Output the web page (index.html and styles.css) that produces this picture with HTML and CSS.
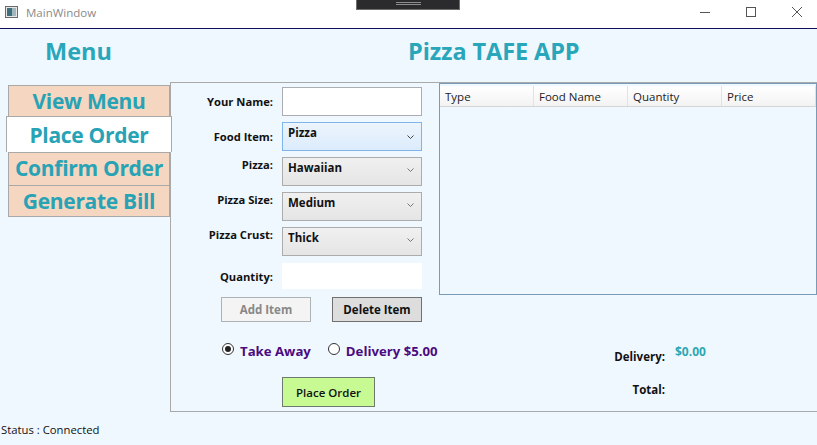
FILE: index.html
```html
<!DOCTYPE html>
<html>
<head>
<meta charset="utf-8">
<title>MainWindow</title>
<link rel="stylesheet" href="styles.css">
</head>
<body>
<div class="window">
  <div class="titlebar">
    <svg class="app-icon" width="13" height="12" viewBox="0 0 13 12">
      <rect x="0.5" y="0.5" width="12" height="11" fill="#e8e8e8" stroke="#6b6b6b"/>
      <rect x="2" y="2" width="5" height="8" fill="#3f6f7a"/>
      <rect x="7" y="2" width="4" height="8" fill="#9fb7bd"/>
    </svg>
    <span class="title-text">MainWindow</span>
    <div class="grip"><span class="grip-lines"></span></div>
    <div class="controls">
      <svg class="ctl" width="46" height="28" viewBox="0 0 46 28"><line x1="18" y1="12.5" x2="28" y2="12.5" stroke="#555" stroke-width="1"/></svg>
      <svg class="ctl" width="46" height="28" viewBox="0 0 46 28"><rect x="18.5" y="7.5" width="9" height="9" fill="none" stroke="#555" stroke-width="1"/></svg>
      <svg class="ctl" width="46" height="28" viewBox="0 0 46 28"><path d="M18 7 L28 17 M28 7 L18 17" stroke="#555" stroke-width="1"/></svg>
    </div>
  </div>
  <div class="app">
    <div class="header">
      <div class="h-menu">Menu</div>
      <div class="h-title">Pizza TAFE APP</div>
    </div>
    <div class="body">
      <div class="tabs">
        <div class="tab">View Menu</div>
        <div class="tab tab-active">Place Order</div>
        <div class="tab">Confirm Order</div>
        <div class="tab tab-last">Generate Bill</div>
      </div>
      <div class="panel">
        <div class="form">
          <div class="fields">
            <div class="lbl">Your Name:</div>
            <div class="textbox"></div>
            <div class="lbl">Food Item:</div>
            <div class="combo combo-focus"><span>Pizza</span><svg class="chev" width="7" height="4" viewBox="0 0 7 4"><polyline points="0.5,0.5 3.5,3.5 6.5,0.5" fill="none" stroke="#444" stroke-width="1"/></svg></div>
            <div class="lbl lbl-top">Pizza:</div>
            <div class="combo"><span>Hawaiian</span><svg class="chev" width="7" height="4" viewBox="0 0 7 4"><polyline points="0.5,0.5 3.5,3.5 6.5,0.5" fill="none" stroke="#777" stroke-width="1"/></svg></div>
            <div class="lbl lbl-top">Pizza Size:</div>
            <div class="combo"><span>Medium</span><svg class="chev" width="7" height="4" viewBox="0 0 7 4"><polyline points="0.5,0.5 3.5,3.5 6.5,0.5" fill="none" stroke="#777" stroke-width="1"/></svg></div>
            <div class="lbl lbl-top">Pizza Crust:</div>
            <div class="combo"><span>Thick</span><svg class="chev" width="7" height="4" viewBox="0 0 7 4"><polyline points="0.5,0.5 3.5,3.5 6.5,0.5" fill="none" stroke="#777" stroke-width="1"/></svg></div>
            <div class="lbl">Quantity:</div>
            <div class="qty"></div>
          </div>
          <div class="btn-row">
            <div class="btn btn-disabled">Add Item</div>
            <div class="btn btn-normal">Delete Item</div>
          </div>
          <div class="radio-row">
            <div class="radio"><span class="dot dot-on"></span><span class="radio-text">Take Away</span></div>
            <div class="radio"><span class="dot"></span><span class="radio-text">Delivery $5.00</span></div>
          </div>
          <div class="order-row">
            <div class="btn-order">Place Order</div>
          </div>
        </div>
        <div class="right">
          <div class="grid">
            <div class="grid-head">
              <div class="col">Type</div>
              <div class="col">Food Name</div>
              <div class="col">Quantity</div>
              <div class="col">Price</div>
            </div>
          </div>
          <div class="summary">
            <div class="s-lbl s-lbl1">Delivery:</div>
            <div class="s-val">$0.00</div>
            <div class="s-lbl s-lbl2">Total:</div>
            <div class="s-val"></div>
          </div>
        </div>
      </div>
    </div>
    <div class="status">Status : Connected</div>
  </div>
</div>
</body>
</html>
```

FILE: styles.css
```css
* { box-sizing: border-box; }
html, body { margin: 0; padding: 0; }
body {
  width: 817px;
  height: 445px;
  overflow: hidden;
  font-family: "Open Sans", "Noto Sans", sans-serif;
  background: #f0f8ff;
}
.window { width: 817px; height: 445px; overflow: hidden; }

.titlebar {
  height: 29px;
  background: #ffffff;
  border-bottom: 1px solid #10105a;
  display: flex;
  align-items: center;
  position: relative;
}
.app-icon { margin-left: 5px; margin-top: -4px; }
.title-text {
  margin-left: 8px;
  margin-top: -4px;
  font-size: 11.5px;
  color: #8a8a8a;
}
.grip {
  position: absolute;
  left: 356px;
  top: 0;
  width: 104px;
  height: 10px;
  background: #2b2b2e;
  border: 1px solid #6e6e6e;
  border-top: none;
}
.grip-lines {
  position: absolute;
  left: 39px;
  top: 2px;
  width: 25px;
  height: 3px;
  border-top: 1px solid #8c8c8c;
  border-bottom: 1px solid #8c8c8c;
}
.controls {
  margin-left: auto;
  display: flex;
  align-self: flex-start;
  margin-right: -3px;
}
.ctl { display: block; }

.app { height: 416px; display: flex; flex-direction: column; }

.header {
  height: 53px;
  flex-shrink: 0;
  display: flex;
  align-items: center;
  color: #2aa6ba;
  font-weight: 700;
  font-size: 23.5px;
  padding-bottom: 10px;
}
.h-menu { width: 408px; padding-left: 45px; }
.h-title { letter-spacing: -0.1px; }

.body { display: flex; height: 330px; flex-shrink: 0; }

.tabs {
  width: 170px;
  flex-shrink: 0;
  padding-top: 3px;
  padding-left: 8px;
  display: flex;
  flex-direction: column;
}
.tab {
  height: 33px;
  background: #f5d6c0;
  border: 1px solid #a9a9a9;
  border-bottom: none;
  color: #27a3b5;
  font-weight: 700;
  font-size: 21px;
  line-height: 31px;
  text-align: center;
  letter-spacing: -0.3px;
  white-space: nowrap;
}
.tab-active {
  height: 36px;
  margin: -2px -2px 0 -2px;
  background: #ffffff;
  border-bottom: none;
  position: relative;
  z-index: 1;
  line-height: 36px;
}
.tab-last { border-bottom: 1px solid #a9a9a9; height: 32px; }

.panel {
  width: 648px;
  height: 330px;
  flex-shrink: 0;
  border: 1px solid #a9a9a9;
  display: flex;
  background: #f0f8ff;
}

.form { width: 268px; flex-shrink: 0; padding-top: 4px; }
.fields {
  display: grid;
  grid-template-columns: 111px 140px;
  grid-auto-rows: 29px;
  row-gap: 6px;
}
.lbl {
  font-size: 11.2px;
  font-weight: 700;
  color: #111;
  text-align: right;
  padding-right: 9px;
  align-self: center;
  white-space: nowrap;
}
.lbl-top { align-self: start; padding-top: 0px; }
.textbox {
  background: #fff;
  border: 1px solid #abadb3;
}
.combo {
  border: 1px solid #acacac;
  background: linear-gradient(#f0f0f0, #e5e5e5);
  display: flex;
  align-items: flex-start;
  justify-content: space-between;
  padding: 2px 7px 0 5px;
  font-size: 11.5px;
  font-weight: 700;
  color: #111;
}
.combo-focus {
  background: linear-gradient(#ecf4fc, #dcecfc);
  border-color: #7eb4ea;
}
.chev { margin-top: 8px; }
.combo-focus .chev { margin-top: 10px; }
.qty { background: #fff; height: 26px; margin-top: 1px; }

.btn-row {
  display: flex;
  gap: 21px;
  padding-left: 50px;
  margin-top: 6px;
}
.btn {
  width: 90px;
  height: 25px;
  font-size: 11.5px;
  font-weight: 700;
  display: flex;
  align-items: center;
  justify-content: center;
}
.btn-disabled { background: #f4f4f4; border: 1px solid #adb2b5; color: #888; }
.btn-normal { background: #dddddd; border: 1px solid #707070; color: #111; }

.radio-row {
  display: flex;
  gap: 17px;
  padding-left: 51px;
  margin-top: 19px;
  height: 20px;
  align-items: center;
  white-space: nowrap;
  width: 300px;
}
.radio { display: flex; align-items: center; gap: 6px; flex-shrink: 0; }
.dot {
  width: 12px;
  height: 12px;
  border-radius: 50%;
  border: 1px solid #333;
  background: #fff;
  margin-top: -4px;
  position: relative;
  flex-shrink: 0;
}
.dot-on::after {
  content: "";
  position: absolute;
  left: 2px;
  top: 2px;
  width: 6px;
  height: 6px;
  border-radius: 50%;
  background: #222;
}
.radio-text {
  color: #4b0a80;
  font-weight: 700;
  font-size: 13.2px;
}

.order-row { padding-left: 111px; margin-top: 16px; }
.btn-order {
  width: 93px;
  height: 30px;
  background: #c8fa94;
  border: 1px solid #6e7a6e;
  font-size: 11.5px;
  font-weight: 600;
  color: #111;
  display: flex;
  align-items: center;
  justify-content: center;
}

.right { width: 378px; flex-shrink: 0; display: flex; flex-direction: column; }
.grid {
  height: 212px;
  flex-shrink: 0;
  border: 1px solid #7a9bb8;
  padding: 2px 0 0 0;
  background: #f0f8ff;
}
.grid-head {
  display: flex;
  height: 21px;
  background: linear-gradient(#ffffff, #f3f3f3);
  border-bottom: 1px solid #d5d5d5;
}
.col {
  width: 94px;
  font-size: 11.5px;
  color: #222;
  padding-left: 5px;
  line-height: 21px;
  border-right: 1px solid #e2e2e2;
}

.summary {
  display: grid;
  flex-shrink: 0;
  grid-template-columns: 226px auto;
  grid-auto-rows: 35px;
  margin-top: 51px;
  font-size: 11.5px;
  font-weight: 700;
}
.s-lbl { text-align: right; color: #111; }
.s-lbl1 { padding-top: 3px; }
.s-lbl2 { padding-top: 1px; }
.s-val { color: #2fa7b3; padding-left: 10px; margin-top: -3px; font-size: 12px; }

.status {
  font-size: 11.3px;
  color: #111;
  padding-left: 1px;
  margin-top: 10px;
}
```
